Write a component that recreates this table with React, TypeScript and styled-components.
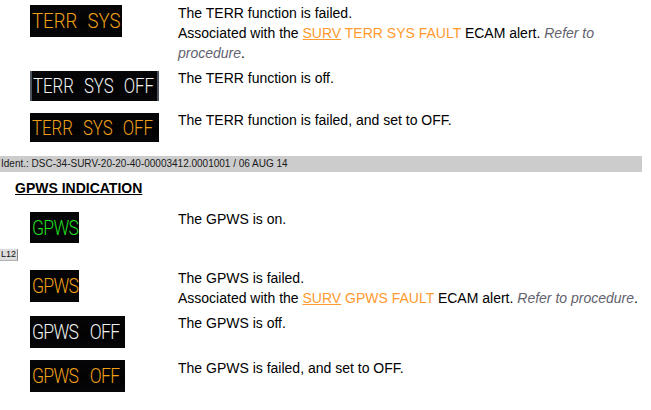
import React from 'react'
import styled, { createGlobalStyle } from 'styled-components'

const Global = createGlobalStyle`
  body {
    margin: 0;
    background: #ffffff;
    font-family: 'Liberation Sans', Arial, sans-serif;
  }
`

const Page = styled.div`
  width: 642px;
  padding-top: 3px;
  color: #000000;
`

const Row = styled.div<{ $h: number }>`
  display: grid;
  grid-template-columns: 178px 1fr;
  align-items: start;
  min-height: ${(p) => p.$h}px;
`

const PanelCell = styled.div`
  padding-left: 30px;
`

// cockpit annunciator: thin lit letters on a black glass
const Panel = styled.div<{ $w: number; $h: number; $top: number; $edge?: boolean }>`
  width: ${(p) => p.$w}px;
  height: ${(p) => p.$h}px;
  margin-top: ${(p) => p.$top}px;
  box-sizing: border-box;
  background: linear-gradient(180deg, #060608 0%, #020203 60%, #07070a 100%);
  border-left: ${(p) => (p.$edge ? '2px solid #4c525c' : 'none')};
  border-right: ${(p) => (p.$edge ? '2px solid #4c525c' : 'none')};
  display: flex;
  align-items: center;
  padding-left: ${(p) => (p.$edge ? 1 : 2)}px;
`

// the lit letters are narrow and tall, so squeeze a light sans sideways
const Label = styled.span<{ $color: string; $sx: number; $ls: number; $ws: number }>`
  display: inline-block;
  font-family: Roboto, 'DejaVu Sans', sans-serif;
  font-weight: 300;
  font-size: 20px;
  line-height: 20px;
  letter-spacing: ${(p) => p.$ls}px;
  word-spacing: ${(p) => p.$ws}px;
  white-space: nowrap;
  color: ${(p) => p.$color};
  transform: scaleX(${(p) => p.$sx});
  transform-origin: left center;
`

const Text = styled.div`
  font-size: 14px;
  line-height: 20px;
`

const Alert = styled.span`
  color: #ff9a2e;
`

const Link = styled(Alert)`
  text-decoration: underline;
`

const Ref = styled.span`
  font-style: italic;
  color: #62626e;
`

const IdentBar = styled.div`
  height: 16px;
  background: #cccccc;
  font-size: 10px;
  line-height: 16px;
  padding-left: 1px;
  color: #1a1a1a;
`

const Heading = styled.div`
  margin: 7px 0 12px 15px;
  font-size: 14px;
  line-height: 18px;
  font-weight: bold;
  text-decoration: underline;
`

const Badge = styled.div`
  width: 17px;
  height: 11px;
  margin-bottom: 7px;
  background: #dcdcdc;
  border-right: 1px solid #8a8a8a;
  border-bottom: 1px solid #b0b0b0;
  font-size: 9px;
  line-height: 11px;
  text-align: center;
  color: #111;
`

const AMBER = '#f0a018'
const WHITE = '#f2f2f2'
const GREEN = '#22dd22'

export default function App() {
  return (
    <Page>
      <Global />
      <Row $h={65}>
        <PanelCell>
          <Panel $w={92} $h={32} $top={2}>
            <Label $color={AMBER} $sx={0.93} $ls={0} $ws={6}>TERR SYS</Label>
          </Panel>
        </PanelCell>
        <Text>
          The TERR function is failed.
          <br />
          Associated with the <Link>SURV</Link> <Alert>TERR SYS FAULT</Alert> ECAM alert. <Ref>Refer to procedure</Ref>.
        </Text>
      </Row>
      <Row $h={42}>
        <PanelCell>
          <Panel $w={129} $h={30} $top={3} $edge>
            <Label $color={WHITE} $sx={0.84} $ls={0} $ws={7}>TERR SYS OFF</Label>
          </Panel>
        </PanelCell>
        <Text>The TERR function is off.</Text>
      </Row>
      <Row $h={46}>
        <PanelCell>
          <Panel $w={129} $h={29} $top={3}>
            <Label $color={AMBER} $sx={0.84} $ls={0} $ws={7}>TERR SYS OFF</Label>
          </Panel>
        </PanelCell>
        <Text>The TERR function is failed, and set to OFF.</Text>
      </Row>
      <IdentBar>Ident.: DSC-34-SURV-20-20-40-00003412.0001001 / 06 AUG 14</IdentBar>
      <Heading>GPWS INDICATION</Heading>
      <Row $h={40}>
        <PanelCell>
          <Panel $w={49} $h={31} $top={3}>
            <Label $color={GREEN} $sx={0.88} $ls={-0.8} $ws={9}>GPWS</Label>
          </Panel>
        </PanelCell>
        <Text>The GPWS is on.</Text>
      </Row>
      <Badge>L12</Badge>
      <Row $h={45}>
        <PanelCell>
          <Panel $w={49} $h={32} $top={2}>
            <Label $color={AMBER} $sx={0.88} $ls={-0.8} $ws={9}>GPWS</Label>
          </Panel>
        </PanelCell>
        <Text>
          The GPWS is failed.
          <br />
          Associated with the <Link>SURV</Link> <Alert>GPWS FAULT</Alert> ECAM alert. <Ref>Refer to procedure</Ref>.
        </Text>
      </Row>
      <Row $h={45}>
        <PanelCell>
          <Panel $w={95} $h={32} $top={3}>
            <Label $color={WHITE} $sx={0.88} $ls={-0.8} $ws={9}>GPWS OFF</Label>
          </Panel>
        </PanelCell>
        <Text>The GPWS is off.</Text>
      </Row>
      <Row $h={40}>
        <PanelCell>
          <Panel $w={95} $h={32} $top={2}>
            <Label $color={AMBER} $sx={0.88} $ls={-0.8} $ws={9}>GPWS OFF</Label>
          </Panel>
        </PanelCell>
        <Text>The GPWS is failed, and set to OFF.</Text>
      </Row>
    </Page>
  )
}
